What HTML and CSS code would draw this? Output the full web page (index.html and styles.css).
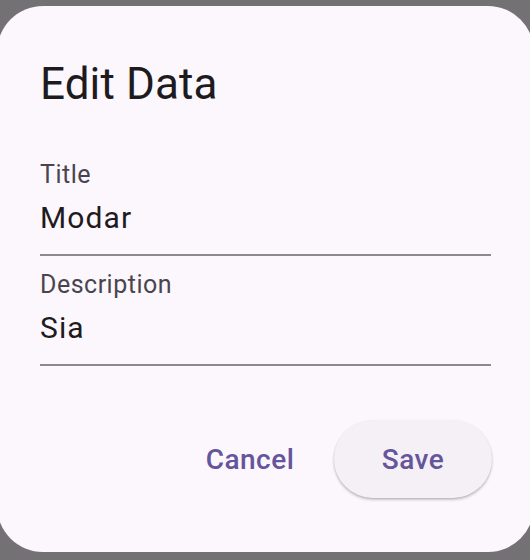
FILE: index.html
```html
<!DOCTYPE html>
<html>
<head>
<meta charset="utf-8">
<link rel="stylesheet" href="styles.css">
</head>
<body>
<div class="dialog">
  <h1 class="title">Edit Data</h1>
  <div class="field first">
    <div class="label">Title</div>
    <div class="value">Modar</div>
  </div>
  <div class="field">
    <div class="label">Description</div>
    <div class="value">Sia</div>
  </div>
  <div class="actions">
    <button class="btn text">Cancel</button>
    <button class="btn elevated">Save</button>
  </div>
</div>
</body>
</html>
```
FILE: styles.css
```css
html, body {
  margin: 0;
  padding: 0;
  background: #737174;
  overflow: hidden;
  height: 560px;
}
body {
  font-family: Roboto, "Liberation Sans", sans-serif;
}
.dialog {
  box-sizing: border-box;
  margin: 6px 0 0 -3px;
  width: 537px;
  height: 546px;
  background: #fcf7fc;
  border-radius: 46px;
  padding: 50px 43px 0 43px;
}
.title {
  margin: 0;
  font-size: 44px;
  line-height: 56px;
  font-weight: 400;
  color: #1d1b20;
  letter-spacing: 0.1px;
}
.field {
  border-bottom: 2px solid #8d8990;
  padding-bottom: 16px;
}
.field.first {
  margin-top: 47.5px;
}
.field + .field {
  margin-top: 13.5px;
}
.label {
  font-size: 25px;
  line-height: 30px;
  color: #49454f;
  letter-spacing: 0.5px;
}
.value {
  margin-top: 8.7px;
  font-size: 30px;
  line-height: 40px;
  color: #1d1b20;
  letter-spacing: 1.1px;
}
.actions {
  display: flex;
  justify-content: flex-end;
  align-items: center;
  margin-top: 54px;
  margin-right: -1px;
}
.btn {
  font-family: Roboto, "Liberation Sans", sans-serif;
  font-size: 28px;
  font-weight: 500;
  letter-spacing: 0.5px;
  color: #65559b;
  border: none;
  background: transparent;
  height: 78px;
  border-radius: 39px;
  padding: 0;
  cursor: pointer;
}
.btn.text {
  width: 128px;
  margin-right: 20px;
}
.btn.elevated {
  width: 158px;
  background: #f4f0f6;
  box-shadow: 0 2px 3px rgba(0,0,0,0.18), 0 1px 2px rgba(0,0,0,0.12);
}
```
